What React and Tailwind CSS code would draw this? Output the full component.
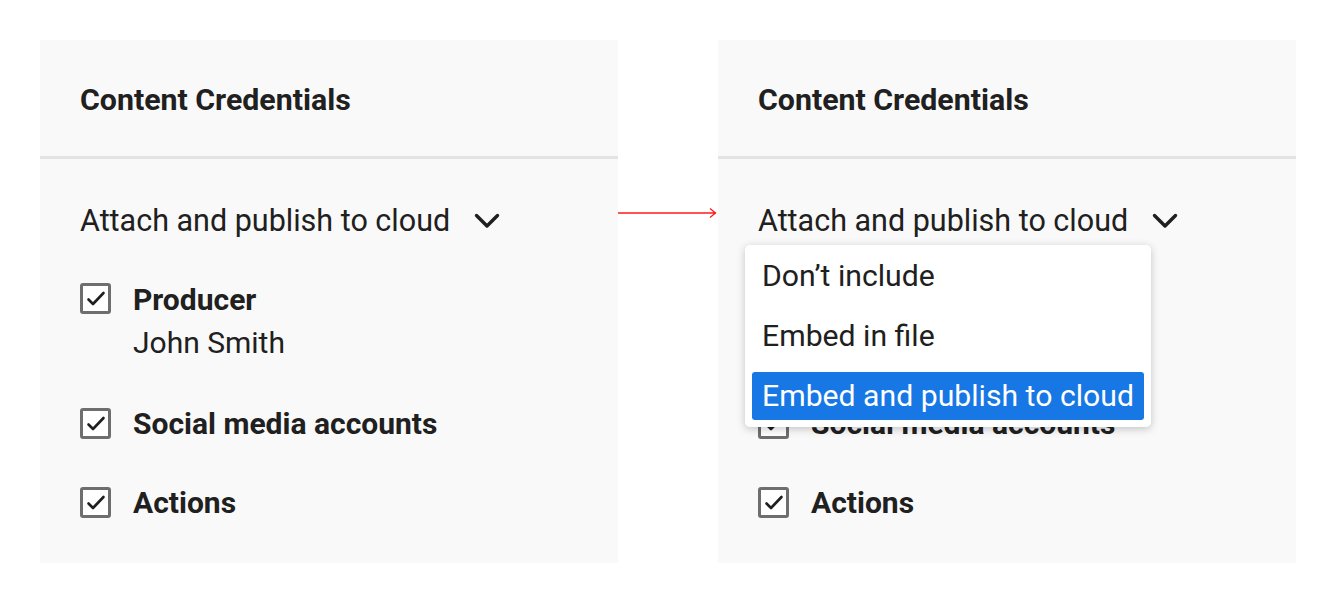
import { useState } from 'react'

const font = { fontFamily: 'Roboto, "Noto Sans", sans-serif' }

function Check() {
  return (
    <div className="w-[31px] h-[31px] shrink-0 rounded-[3px] border-[3px] border-[#6e6e6e] flex items-center justify-center bg-white">
      <svg width="20" height="16" viewBox="0 0 20 16" fill="none">
        <path d="M2.5 8.5l4.5 4.5L17.5 2" stroke="#1f1f1f" strokeWidth="2.6" strokeLinecap="round" strokeLinejoin="round" />
      </svg>
    </div>
  )
}

function Chevron() {
  return (
    <svg width="26" height="16" viewBox="0 0 26 16" fill="none">
      <path d="M2.5 2.5l10.5 10.5L23.5 2.5" stroke="#1f1f1f" strokeWidth="3.4" strokeLinecap="round" strokeLinejoin="round" />
    </svg>
  )
}

function Menu() {
  const items = ["Don’t include", 'Embed in file', 'Embed and publish to cloud']
  return (
    <div className="absolute left-[-13px] top-[42px] w-[406px] bg-white rounded-[5px] shadow-[0_2px_8px_rgba(0,0,0,0.22)] py-[7px] px-[7px] flex flex-col gap-[12px] z-10">
      {items.map((t, i) => (
        <div
          key={t}
          className={`h-[48px] px-[10px] flex items-center rounded-[3px] text-[30.2px] whitespace-nowrap ${i === 2 ? 'bg-[#1677e5] text-white' : 'text-[#202020]'}`}
        >
          {t}
        </div>
      ))}
    </div>
  )
}

function Panel({ open }) {
  return (
    <div className="w-[578px] h-[523px] bg-[#f9f9f9] shrink-0 text-[#202020]" style={font}>
      <div className="h-[119px] border-b-[3px] border-[#e3e3e3] px-[40px] flex items-center">
        <h2 className="text-[30.3px] font-bold mt-[3px] whitespace-nowrap">Content Credentials</h2>
      </div>
      <div className="pl-[40px] pt-[44px] flex flex-col">
        <div className="relative flex items-center gap-[24px] h-[36px]">
          <span className="text-[30.5px] leading-[36px] whitespace-nowrap">Attach and publish to cloud</span>
          <Chevron />
          {open && <Menu />}
        </div>
        <div className="flex gap-[22px] mt-[39px]">
          <div className="pt-[5px]"><Check /></div>
          <div className="flex flex-col">
            <span className="text-[30px] leading-[43px] font-bold">Producer</span>
            <span className="text-[30px] leading-[43px]">John Smith</span>
          </div>
        </div>
        <div className="flex items-center gap-[22px] mt-[38px]">
          <Check />
          <span className="text-[30px] leading-[43px] font-bold whitespace-nowrap">Social media accounts</span>
        </div>
        <div className="flex items-center gap-[22px] mt-[36px]">
          <Check />
          <span className="text-[30px] leading-[43px] font-bold">Actions</span>
        </div>
      </div>
    </div>
  )
}

export default function App() {
  const [open] = useState(true)
  return (
    <div className="w-[1336px] h-[604px] bg-white flex p-[40px]">
      <Panel open={false} />
      <div className="w-[100px] shrink-0 pt-[167px]">
        <svg width="100" height="12" viewBox="0 0 100 12" fill="none">
          <path d="M0 6h98M92 1.5l5.5 4.5L92 10.5" stroke="#ff1a1a" strokeWidth="1.3" />
        </svg>
      </div>
      <Panel open={open} />
    </div>
  )
}
